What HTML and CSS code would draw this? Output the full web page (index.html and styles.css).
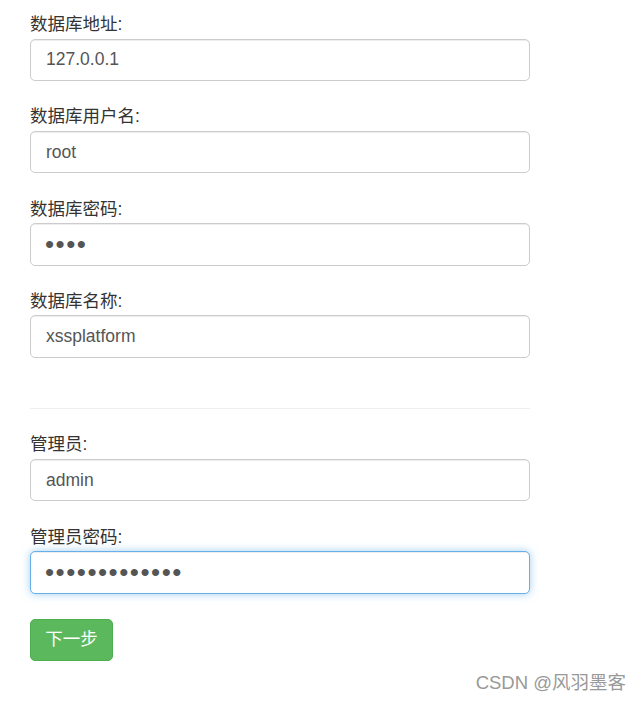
FILE: index.html
```html
<!DOCTYPE html>
<html>
<head>
 <meta charset="UTF-8">
 <title>安装</title>
 <link rel="stylesheet" href="styles.css">
</head>
<body>
<form class="install">
  <div class="group"><label>数据库地址:</label><input class="ctl" type="text" value="127.0.0.1"></div>
  <div class="group"><label>数据库用户名:</label><input class="ctl" type="text" value="root"></div>
  <div class="group"><label>数据库密码:</label><input class="ctl" type="password" value="root"></div>
  <div class="group"><label>数据库名称:</label><input class="ctl" type="text" value="xssplatform"></div>
  <hr>
  <div class="group"><label>管理员:</label><input class="ctl" type="text" value="admin"></div>
  <div class="group"><label>管理员密码:</label><input class="ctl focus" type="password" value="1234567890123"></div>
  <button type="button" class="btn">下一步</button>
</form>
<div class="mark">CSDN @风羽墨客</div>
</body>
</html>
```

FILE: styles.css
```css
body { margin: 0; background: #fff; color: #333;
  font-family: "Liberation Sans", Arial, "Noto Sans CJK SC", sans-serif;
  font-size: 17.5px; line-height: 25px; }
.install { width: 500px; padding: 7.5px 0 0 30px; }
.group { margin-bottom: 18.8px; }
label { display: block; padding-top: 4.5px; margin-bottom: 1.5px; font-weight: normal; }
.ctl { display: block; box-sizing: border-box; width: 500px; height: 42.5px;
  padding: 7px 15px; border: 1px solid #ccc; border-radius: 5px;
  font: inherit; color: #555; background: #fff; outline: none;
  box-shadow: inset 0 1px 1px rgba(0,0,0,.075); }
.focus { border-color: #66afe9;
  box-shadow: inset 0 1px 1px rgba(0,0,0,.075), 0 0 8px rgba(102,175,233,.6); }
input[type=password] { letter-spacing: 1.5px; font-size: 26px; padding-left: 14px; }
hr { border: 0; border-top: 1px solid #eee; margin: 50px 0 19px; }
.btn { display: block; margin-top: 25px; width: 83px; height: 42px;
  border: 1px solid #4cae4c; border-radius: 5px; background: #5cb85c;
  color: #fff; font: inherit; padding: 0; }
.mark { position: absolute; right: 15px; top: 671px; color: #999;
  font-size: 18.5px; line-height: 24px; }
```
